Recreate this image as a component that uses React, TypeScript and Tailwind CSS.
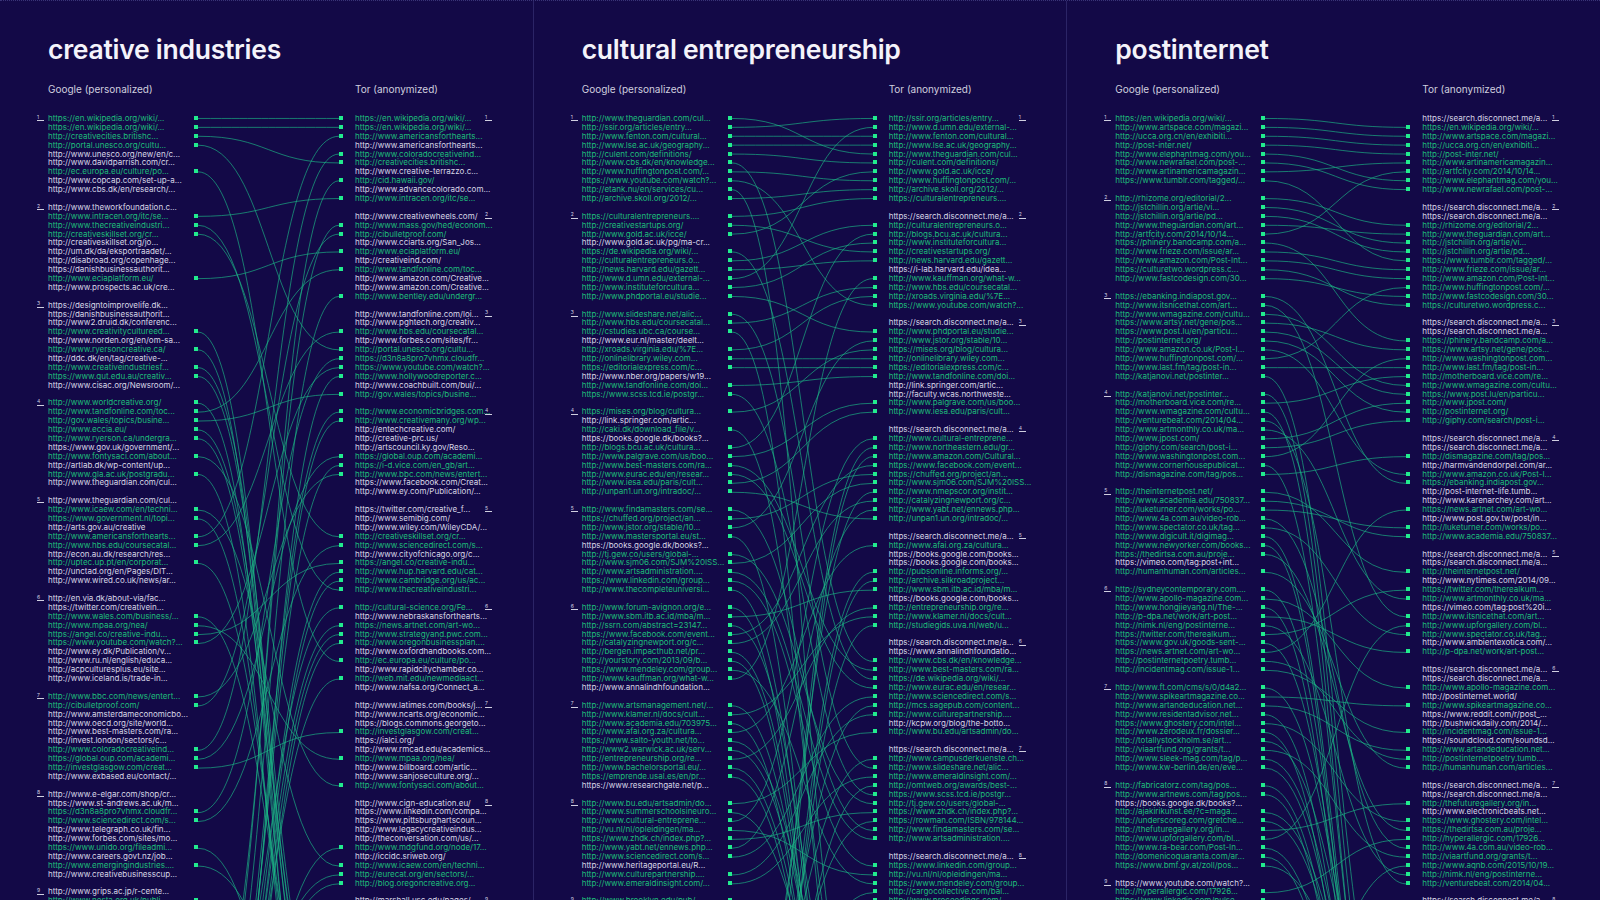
import React from 'react';

// ============================================================================
// SEARCH RESULT COMPARISON - Google (personalized) vs Tor (anonymized)
// ============================================================================

const ROW = 8.9;
const GAP_W = 141;

type Row = { text?: string; green?: boolean; label?: number; blank?: boolean };

interface PanelData {
    title: string;
    google: string[][];
    tor: string[][];
}

const panels: PanelData[] = [
    {
        title: 'creative industries',
        google: [
            ['+https://en.wikipedia.org/wiki/...', '+https://en.wikipedia.org/wiki/...', '+http://creativecities.britishc...', '+http://portal.unesco.org/cultu...', 'http://www.unesco.org/new/en/c...', 'http://www.davidparrish.com/cr...', '+http://ec.europa.eu/culture/po...', 'http://www.copcap.com/set-up-a...', 'http://www.cbs.dk/en/research/...'],
            ['http://www.theworkfoundation.c...', '+http://www.intracen.org/itc/se...', '+http://www.thecreativeindustri...', '+http://creativeskillset.org/cr...', 'http://creativeskillset.org/jo...', 'http://um.dk/da/eksportraadet/...', 'http://disabroad.org/copenhage...', 'https://danishbusinessauthorit...', '+http://www.eciaplatform.eu/', 'http://www.prospects.ac.uk/cre...'],
            ['https://designtoimprovelife.dk...', 'https://danishbusinessauthorit...', 'http://www2.druid.dk/conferenc...', '+http://www.creativitycultureed...', 'http://www.norden.org/en/om-sa...', '+http://www.ryersoncreative.ca/', 'http://ddc.dk/en/tag/creative-...', '+http://www.creativeindustriesf...', '+https://www.qut.edu.au/creativ...', 'http://www.cisac.org/Newsroom/...'],
            ['+http://www.worldcreative.org/', '+http://www.tandfonline.com/toc...', '+http://gov.wales/topics/busine...', '+http://www.eccia.eu/', '+http://www.ryerson.ca/undergra...', 'https://www.gov.uk/government/...', '+http://www.fontysaci.com/about...', 'http://artlab.dk/wp-content/up...', '+http://www.gla.ac.uk/postgradu...', 'http://www.theguardian.com/cul...'],
            ['http://www.theguardian.com/cul...', '+http://www.icaew.com/en/techni...', '+https://www.government.nl/topi...', 'http://arts.gov.au/creative', '+http://www.americansforthearts...', '+http://www.hbs.edu/coursecatal...', 'http://econ.au.dk/research/res...', '+http://uptec.up.pt/en/corporat...', 'http://unctad.org/en/Pages/DIT...', 'http://www.wired.co.uk/news/ar...'],
            ['http://en.via.dk/about-via/fac...', 'https://twitter.com/creativein...', '+http://www.wales.com/business/...', '+http://www.mpaa.org/nea/', '+https://angel.co/creative-indu...', '+https://www.youtube.com/watch?...', 'http://www.ey.dk/Publication/v...', 'http://www.ru.nl/english/educa...', 'http://acpculturesplus.eu/site...', 'http://www.iceland.is/trade-in...'],
            ['+http://www.bbc.com/news/entert...', '+http://cibulletproof.com/', 'http://www.amsterdameconomicbo...', 'http://www.oecd.org/site/world...', 'http://www.best-masters.com/ra...', 'http://invest.london/sectors/c...', '+http://www.coloradocreativeind...', '+https://global.oup.com/academi...', '+http://investglasgow.com/creat...', 'http://www.exbased.eu/contact/...'],
            ['http://www.e-elgar.com/shop/cr...', 'https://www.st-andrews.ac.uk/m...', '+https://d3n8a8pro7vhmx.cloudfr...', '+http://www.sciencedirect.com/s...', 'http://www.telegraph.co.uk/fin...', 'http://www.forbes.com/sites/mo...', '+https://www.unido.org/fileadmi...', 'http://www.careers.govt.nz/job...', '+http://www.emergingindustries....', 'http://www.creativebusinesscup...'],
            ['http://www.grips.ac.jp/r-cente...', '+http://www.nesta.org.uk/publi...'],
        ],
        tor: [
            ['+https://en.wikipedia.org/wiki/...', '+https://en.wikipedia.org/wiki/...', '+http://www.americansforthearts...', 'http://www.americansforthearts...', '+http://www.coloradocreativeind...', '+http://creativecities.britishc...', 'http://www.creative-terrazzo.c...', '+http://cid.hawaii.gov/', 'http://www.advancecolorado.com...', '+http://www.intracen.org/itc/se...'],
            ['http://www.creativewheels.com/', '+http://www.mass.gov/hed/econom...', '+http://cibulletproof.com/', 'http://www.cciarts.org/San_Jos...', '+http://www.eciaplatform.eu/', 'http://creativeind.com/', '+http://www.tandfonline.com/toc...', 'http://www.amazon.com/Creative...', 'http://www.amazon.com/Creative...', '+http://www.bentley.edu/undergr...'],
            ['http://www.tandfonline.com/loi...', 'http://www.pghtech.org/creativ...', '+http://www.hbs.edu/coursecatal...', 'http://www.forbes.com/sites/fr...', '+http://portal.unesco.org/cultu...', '+https://d3n8a8pro7vhmx.cloudfr...', '+https://www.youtube.com/watch?...', '+http://www.hollywoodreporter.c...', 'http://www.coachbuilt.com/bui/...', '+http://gov.wales/topics/busine...'],
            ['+http://www.economicbridges.com...', '+http://www.creativemany.org/wp...', 'http://entechcreative.com/', 'http://creative-prc.us/', 'http://artscouncil.ky.gov/Reso...', '+https://global.oup.com/academi...', '+https://i-d.vice.com/en_gb/art...', '+http://www.bbc.com/news/entert...', 'https://www.facebook.com/Creat...', 'http://www.ey.com/Publication/...'],
            ['https://twitter.com/creative_f...', 'http://www.semibig.com/', 'http://www.wiley.com/WileyCDA/...', '+http://creativeskillset.org/cr...', '+http://www.sciencedirect.com/s...', 'http://www.cityofchicago.org/c...', '+https://angel.co/creative-indu...', '+http://www.hup.harvard.edu/cat...', '+http://www.cambridge.org/us/ac...', '+http://www.thecreativeindustri...'],
            ['+http://cultural-science.org/Fe...', 'http://www.nebraskansforthearts...', '+https://news.artnet.com/art-wo...', '+http://www.strategyand.pwc.com...', '+http://www.oregonbusinessplan....', 'http://www.oxfordhandbooks.com...', '+http://ec.europa.eu/culture/po...', 'http://www.rapidcitychamber.co...', '+http://web.mit.edu/newmediaact...', 'http://www.nafsa.org/Connect_a...'],
            ['http://www.latimes.com/books/j...', 'http://www.ncarts.org/economic...', 'https://blogs.commons.georgeto...', '+http://investglasgow.com/creat...', 'https://ialci.org/', 'http://www.rmcad.edu/academics...', '+http://www.mpaa.org/nea/', 'http://www.billboard.com/artic...', 'http://www.sanjoseculture.org/...', '+http://www.fontysaci.com/about...'],
            ['http://www.cign-education.eu/', 'https://www.linkedin.com/compa...', 'https://www.pittsburghartscoun...', 'http://www.legacycreativeindus...', 'http://theconversation.com/us/...', '+http://www.mdgfund.org/node/17...', 'http://iccidc.sriweb.org/', '+http://www.icaew.com/en/techni...', '+http://eurecat.org/en/sectors/...', '+http://blog.oregoncreative.org...'],
            ['http://marshall.usc.edu/pages/...'],
        ],
    },
    {
        title: 'cultural entrepreneurship',
        google: [
            ['+http://www.theguardian.com/cul...', '+http://ssir.org/articles/entry...', '+http://www.fenton.com/cultural...', '+http://www.lse.ac.uk/geography...', '+http://culent.com/definitions/', '+http://www.cbs.dk/en/knowledge...', '+http://www.huffingtonpost.com/...', '+https://www.youtube.com/watch?...', '+http://etank.nu/en/services/cu...', '+http://archive.skoll.org/2012/...'],
            ['+https://culturalentrepreneurs....', '+http://creativestartups.org/', '+http://www.gold.ac.uk/icce/', 'http://www.gold.ac.uk/pg/ma-cr...', '+https://de.wikipedia.org/wiki/...', '+http://culturalentrepreneurs.o...', '+http://news.harvard.edu/gazett...', '+http://www.d.umn.edu/external-...', '+http://www.instituteforcultura...', '+http://www.phdportal.eu/studie...'],
            ['+http://www.slideshare.net/alic...', '+http://www.hbs.edu/coursecatal...', '+http://cstudies.ubc.ca/course...', 'http://www.eur.nl/master/deelt...', '+http://xroads.virginia.edu/%7E...', '+http://onlinelibrary.wiley.com...', '+https://editorialexpress.com/c...', 'http://www.nber.org/papers/w19...', '+http://www.tandfonline.com/doi...', '+https://www.scss.tcd.ie/postgr...'],
            ['+https://mises.org/blog/cultura...', 'http://link.springer.com/artic...', '+http://caki.dk/download_file/v...', 'https://books.google.dk/books?...', '+http://blogs.bcu.ac.uk/cultura...', '+http://www.palgrave.com/us/boo...', '+http://www.best-masters.com/ra...', '+http://www.eurac.edu/en/resear...', '+http://www.iesa.edu/paris/cult...', '+http://unpan1.un.org/intradoc/...'],
            ['+http://www.findamasters.com/se...', '+https://chuffed.org/project/an...', '+http://www.jstor.org/stable/10...', '+http://www.mastersportal.eu/st...', 'https://books.google.dk/books?...', '+http://tj.gew.co/users/global-...', '+http://www.sjm06.com/SJM%20ISS...', '+http://www.artsadministration....', '+https://www.linkedin.com/group...', '+http://www.thecompleteuniversi...'],
            ['+http://www.forum-avignon.org/e...', '+http://www.sbm.itb.ac.id/mba/m...', '+http://ssrn.com/abstract=23147...', '+https://www.facebook.com/event...', '+http://catalyzingnewport.org/c...', '+http://bergen.impacthub.net/pr...', '+http://yourstory.com/2013/09/b...', '+https://www.mendeley.com/group...', '+http://www.kauffman.org/what-w...', 'http://www.annalindhfoundation...'],
            ['+http://www.artsmanagement.net/...', '+http://www.klamer.nl/docs/cult...', '+http://www.academia.edu/703975...', '+http://www.afai.org.za/cultura...', '+https://www.salto-youth.net/to...', '+http://www2.warwick.ac.uk/serv...', '+http://entrepreneurship.org/re...', '+http://www.bachelorsportal.eu/...', '+https://emprende.usal.es/en/pr...', 'https://www.researchgate.net/p...'],
            ['+http://www.bu.edu/artsadmin/do...', '+http://www.summerschoolsineuro...', '+http://www.cultural-entreprene...', '+http://vu.nl/nl/opleidingen/ma...', '+https://www.zhdk.ch/index.php?...', '+http://www.yabt.net/ennews.php...', '+http://www.sciencedirect.com/s...', 'http://www.heritageportal.eu/R...', '+http://www.culturepartnership....', '+http://www.emeraldinsight.com/...'],
            ['+http://www.brooklyn.edu/pub/...'],
        ],
        tor: [
            ['+http://ssir.org/articles/entry...', '+http://www.d.umn.edu/external-...', '+http://www.fenton.com/cultural...', '+http://www.lse.ac.uk/geography...', '+http://www.theguardian.com/cul...', '+http://culent.com/definitions/', '+http://www.gold.ac.uk/icce/', '+http://www.huffingtonpost.com/...', '+http://archive.skoll.org/2012/...', '+https://culturalentrepreneurs....'],
            ['https://search.disconnect.me/a...', '+http://culturalentrepreneurs.o...', '+http://blogs.bcu.ac.uk/cultura...', '+http://www.instituteforcultura...', '+http://creativestartups.org/', '+http://news.harvard.edu/gazett...', 'https://i-lab.harvard.edu/idea...', '+http://www.kauffman.org/what-w...', '+http://www.hbs.edu/coursecatal...', '+http://xroads.virginia.edu/%7E...', '+https://www.youtube.com/watch?...'],
            ['https://search.disconnect.me/a...', '+http://www.phdportal.eu/studie...', '+http://www.jstor.org/stable/10...', '+https://mises.org/blog/cultura...', '+http://onlinelibrary.wiley.com...', '+https://editorialexpress.com/c...', '+http://www.tandfonline.com/doi...', 'http://link.springer.com/artic...', 'http://faculty.wcas.northweste...', '+http://www.palgrave.com/us/boo...', '+http://www.iesa.edu/paris/cult...'],
            ['https://search.disconnect.me/a...', '+http://www.cultural-entreprene...', '+http://www.northeastern.edu/gr...', '+http://www.amazon.com/Cultural...', '+https://www.facebook.com/event...', '+https://chuffed.org/project/an...', '+http://www.sjm06.com/SJM%20ISS...', '+http://www.nmepscor.org/instit...', '+http://catalyzingnewport.org/c...', '+http://www.yabt.net/ennews.php...', '+http://unpan1.un.org/intradoc/...'],
            ['https://search.disconnect.me/a...', '+http://www.afai.org.za/cultura...', 'https://books.google.com/books...', 'https://books.google.com/books...', '+http://pubsonline.informs.org/...', '+http://archive.silkroadproject...', '+http://www.sbm.itb.ac.id/mba/m...', 'https://books.google.com/books...', '+http://entrepreneurship.org/re...', '+http://www.klamer.nl/docs/cult...', '+http://studiegids.uva.nl/web/u...'],
            ['https://search.disconnect.me/a...', 'https://www.annalindhfoundatio...', '+http://www.cbs.dk/en/knowledge...', '+http://www.best-masters.com/ra...', '+https://de.wikipedia.org/wiki/...', '+http://www.eurac.edu/en/resear...', '+http://www.sciencedirect.com/s...', '+http://mcs.sagepub.com/content...', '+http://www.culturepartnership....', 'http://kcpw.org/blog/the-botto...', '+http://www.bu.edu/artsadmin/do...'],
            ['https://search.disconnect.me/a...', '+http://www.campusderkuenste.ch...', '+http://www.slideshare.net/alic...', '+http://www.emeraldinsight.com/...', '+http://omtweb.org/awards/best-...', '+https://www.scss.tcd.ie/postgr...', '+http://tj.gew.co/users/global-...', '+https://www.zhdk.ch/index.php?...', '+https://rowman.com/ISBN/978144...', '+http://www.findamasters.com/se...', '+http://www.artsadministration....'],
            ['https://search.disconnect.me/a...', '+https://www.linkedin.com/group...', '+http://vu.nl/nl/opleidingen/ma...', '+https://www.mendeley.com/group...', '+http://cargocollective.com/bal...', '+http://www.proceedings.com/...'],
        ],
    },
    {
        title: 'postinternet',
        google: [
            ['+https://en.wikipedia.org/wiki/...', '+http://www.artspace.com/magazi...', '+http://ucca.org.cn/en/exhibiti...', '+http://post-inter.net/', '+http://www.elephantmag.com/you...', '+http://www.newrafael.com/post-...', '+http://www.artinamericamagazin...', '+https://www.tumblr.com/tagged/...'],
            ['+http://rhizome.org/editorial/2...', '+http://jstchillin.org/artie/vi...', '+http://jstchillin.org/artie/pd...', '+http://www.theguardian.com/art...', '+http://artfcity.com/2014/10/14...', '+https://phinery.bandcamp.com/a...', '+http://www.frieze.com/issue/ar...', '+http://www.amazon.com/Post-Int...', '+https://culturetwo.wordpress.c...', '+http://www.fastcodesign.com/30...'],
            ['+https://ebanking.indiapost.gov...', '+http://www.itsnicethat.com/art...', '+http://www.wmagazine.com/cultu...', '+https://www.artsy.net/gene/pos...', '+https://www.post.lu/en/particu...', '+http://postinternet.org/', '+http://www.amazon.co.uk/Post-I...', '+http://www.huffingtonpost.com/...', '+http://www.last.fm/tag/post-in...', '+http://katjanovi.net/postinter...'],
            ['+http://katjanovi.net/postinter...', '+http://motherboard.vice.com/re...', '+http://www.wmagazine.com/cultu...', '+http://venturebeat.com/2014/04...', '+http://www.artmonthly.co.uk/ma...', '+http://www.jpost.com/', '+http://giphy.com/search/post-i...', '+http://www.washingtonpost.com...', '+http://www.cornerhousepublicat...', '+http://dismagazine.com/tag/pos...'],
            ['+http://theinternetpost.net/', '+http://www.academia.edu/750837...', '+http://luketurner.com/works/po...', '+http://www.4a.com.au/video-rob...', '+http://www.spectator.co.uk/tag...', '+http://www.digicult.it/digimag...', '+http://www.newyorker.com/books...', '+https://thedirtsa.com.au/proje...', 'https://vimeo.com/tag:post+int...', '+http://humanhuman.com/articles...'],
            ['+http://sydneycontemporary.com....', '+http://www.apollo-magazine.com...', '+http://www.hongjieyang.nl/The-...', '+http://p-dpa.net/work/art-post...', '+http://nimk.nl/eng/postinterne...', '+https://twitter.com/therealkum...', '+https://www.gov.uk/goods-sent-...', '+https://news.artnet.com/art-wo...', '+http://postinternetpoetry.tumb...', '+http://incidentmag.com/issue-1...'],
            ['+http://www.ft.com/cms/s/0/d4a2...', '+http://www.spikeartmagazine.co...', '+http://www.artandeducation.net...', '+http://www.residentadvisor.net...', '+https://www.ghostery.com/intel...', '+http://www.zerodeux.fr/dossier...', '+http://totallystockholm.se/art...', '+http://viaartfund.org/grants/t...', '+http://www.sleek-mag.com/tag/p...', '+http://www.kw-berlin.de/en/eve...'],
            ['+http://fabricatorz.com/tag/pos...', '+http://www.artnews.com/tag/pos...', 'https://books.google.dk/books?...', '+http://ajakirikunst.ee/?c=maga...', '+http://underscoreg.com/gretche...', '+http://thefuturegallery.org/in...', '+http://www.upforgallery.com/bl...', '+http://www.ra-bear.com/Post-In...', '+http://domenicoquaranta.com/ar...', '+https://www.bmf.gv.at/zoll/pos...'],
            ['https://www.youtube.com/watch?...', '+http://hyperallergic.com/17926...', '+https://www.linkedin.com/pulse...'],
        ],
        tor: [
            ['https://search.disconnect.me/a...', '+https://en.wikipedia.org/wiki/...', '+http://www.artspace.com/magazi...', '+http://ucca.org.cn/en/exhibiti...', '+http://post-inter.net/', '+http://www.artinamericamagazin...', '+http://artfcity.com/2014/10/14...', '+http://www.elephantmag.com/you...', '+http://www.newrafael.com/post-...'],
            ['https://search.disconnect.me/a...', 'https://search.disconnect.me/a...', '+http://rhizome.org/editorial/2...', '+http://www.theguardian.com/art...', '+http://jstchillin.org/artie/vi...', '+http://jstchillin.org/artie/pd...', '+https://www.tumblr.com/tagged/...', '+http://www.frieze.com/issue/ar...', '+http://www.amazon.com/Post-Int...', '+http://www.huffingtonpost.com/...', '+http://www.fastcodesign.com/30...', '+https://culturetwo.wordpress.c...'],
            ['https://search.disconnect.me/a...', 'https://search.disconnect.me/a...', '+https://phinery.bandcamp.com/a...', '+https://www.artsy.net/gene/pos...', '+http://www.washingtonpost.com...', '+http://www.last.fm/tag/post-in...', '+http://motherboard.vice.com/re...', '+http://www.wmagazine.com/cultu...', '+https://www.post.lu/en/particu...', '+http://www.jpost.com/', '+http://postinternet.org/', '+http://giphy.com/search/post-i...'],
            ['https://search.disconnect.me/a...', 'https://search.disconnect.me/a...', '+http://dismagazine.com/tag/pos...', 'http://harmvandendorpel.com/ar...', '+http://www.amazon.co.uk/Post-I...', '+https://ebanking.indiapost.gov...', 'http://post-internet-life.tumb...', 'http://www.karenarchey.com/art...', '+https://news.artnet.com/art-wo...', 'http://www.post.gov.tw/post/in...', '+http://luketurner.com/works/po...', '+http://www.academia.edu/750837...'],
            ['https://search.disconnect.me/a...', 'https://search.disconnect.me/a...', '+http://theinternetpost.net/', 'http://www.nytimes.com/2014/09...', '+https://twitter.com/therealkum...', '+http://www.artmonthly.co.uk/ma...', 'https://vimeo.com/tag:post%20i...', '+http://www.itsnicethat.com/art...', '+http://www.upforgallery.com/bl...', '+http://www.spectator.co.uk/tag...', 'http://www.ambientexotica.com/...', '+http://p-dpa.net/work/art-post...'],
            ['https://search.disconnect.me/a...', 'https://search.disconnect.me/a...', '+http://www.apollo-magazine.com...', 'http://postinternet.world/', '+http://www.spikeartmagazine.co...', 'https://www.reddit.com/r/post_...', 'http://bushwickdaily.com/2014/...', '+http://incidentmag.com/issue-1...', 'https://soundcloud.com/soundsd...', '+http://www.artandeducation.net...', '+http://postinternetpoetry.tumb...', '+http://humanhuman.com/articles...'],
            ['https://search.disconnect.me/a...', 'https://search.disconnect.me/a...', '+http://thefuturegallery.org/in...', 'http://www.electronicbeats.net...', '+https://www.ghostery.com/intel...', '+https://thedirtsa.com.au/proje...', '+http://hyperallergic.com/17926...', '+http://www.4a.com.au/video-rob...', '+http://viaartfund.org/grants/t...', '+http://www.aqnb.com/2015/10/19...', '+http://nimk.nl/eng/postinterne...', '+http://venturebeat.com/2014/04...'],
            ['https://search.disconnect.me/a...'],
        ],
    },
];

const toRows = (groups: string[][]): Row[] => {
    const rows: Row[] = [];
    groups.forEach((group, gi) => {
        group.forEach((s, j) => {
            const green = s.startsWith('+');
            rows.push({ text: green ? s.slice(1) : s, green, label: j === 0 ? gi + 1 : undefined });
        });
        rows.push({ blank: true });
    });
    return rows;
};

const buildLines = (left: Row[], right: Row[]) => {
    const used = new Set<number>();
    const lines: { y1: number; y2: number }[] = [];
    left.forEach((l, i) => {
        if (!l.green) return;
        const j = right.findIndex((r, k) => r.green && !used.has(k) && r.text === l.text);
        const y1 = i * ROW + ROW / 2;
        if (j >= 0) {
            used.add(j);
            lines.push({ y1, y2: j * ROW + ROW / 2 });
        } else {
            // match sits further down the result list, out of view
            lines.push({ y1, y2: 940 + (i % 7) * 24 });
        }
    });
    right.forEach((r, k) => {
        if (!r.green || used.has(k)) return;
        lines.push({ y1: 940 + (k % 6) * 28, y2: k * ROW + ROW / 2 });
    });
    return lines;
};

const GroupLabel = ({ n }: { n: number }) => (
    <div className="w-[7px] border-b border-[#d0cfe0] pb-[0.5px] text-[5px] leading-[5px] text-[#d0cfe0]">{n}</div>
);

const Marker = () => <div className="h-[4px] w-[4px] bg-[#22ec8e]" />;

const GoogleList = ({ rows }: { rows: Row[] }) => (
    <div className="flex w-[161px] shrink-0 flex-col">
        {rows.map((r, i) =>
            r.blank ? (
                <div key={i} className="h-[8.9px]" />
            ) : (
                <div key={i} className="flex h-[8.9px] items-center">
                    <div className="w-[11px] shrink-0">{r.label && <GroupLabel n={r.label} />}</div>
                    <div className={`w-[146px] shrink-0 whitespace-nowrap text-[8px] leading-none ${r.green ? 'text-[#1ebd7a]' : 'text-[#d8d7e6]'}`}>
                        {r.text}
                    </div>
                    <div className="w-[4px] shrink-0">{r.green && <Marker />}</div>
                </div>
            )
        )}
    </div>
);

const TorList = ({ rows }: { rows: Row[] }) => (
    <div className="flex shrink-0 flex-col">
        {rows.map((r, i) =>
            r.blank ? (
                <div key={i} className="h-[8.9px]" />
            ) : (
                <div key={i} className="flex h-[8.9px] items-center">
                    <div className="w-[4px] shrink-0">{r.green && <Marker />}</div>
                    <div className={`ml-[12px] w-[130px] shrink-0 whitespace-nowrap text-[8px] leading-none ${r.green ? 'text-[#1ebd7a]' : 'text-[#d8d7e6]'}`}>
                        {r.text}
                    </div>
                    <div className="shrink-0">{r.label && <GroupLabel n={r.label} />}</div>
                </div>
            )
        )}
    </div>
);

const Panel = ({ data, first }: { data: PanelData; first: boolean }) => {
    const left = toRows(data.google);
    const right = toRows(data.tor);
    const lines = buildLines(left, right);

    return (
        <section className={`flex min-w-0 flex-1 flex-col overflow-hidden ${first ? '' : 'border-l border-[#2b2466]'}`}>
            <h2 className="pl-[48px] pt-[35px] text-[26.5px] font-semibold leading-none tracking-[-0.01em] text-[#f4f3fa]">{data.title}</h2>
            <div className="mt-[21px] flex pl-[48px] text-[10px] leading-none text-[#cfcedf]">
                <span className="w-[307px] shrink-0">Google (personalized)</span>
                <span>Tor (anonymized)</span>
            </div>
            <div className="mt-[20px] flex items-start pl-[37px]">
                <GoogleList rows={left} />
                <svg width={GAP_W} height={800} className="shrink-0 overflow-visible">
                    {lines.map((l, i) => (
                        <path
                            key={i}
                            d={`M0 ${l.y1} C${GAP_W / 2} ${l.y1} ${GAP_W / 2} ${l.y2} ${GAP_W} ${l.y2}`}
                            fill="none"
                            stroke="#1cb685"
                            strokeOpacity={0.78}
                            strokeWidth={0.85}
                        />
                    ))}
                </svg>
                <TorList rows={right} />
            </div>
        </section>
    );
};

export default function App() {
    return (
        <div className="flex h-[900px] w-[1600px] overflow-hidden border-t border-dotted border-[#3a3478] bg-[#130947] font-['Inter','Noto_Sans',sans-serif] antialiased">
            {panels.map((p, i) => (
                <Panel key={p.title} data={p} first={i === 0} />
            ))}
        </div>
    );
}
